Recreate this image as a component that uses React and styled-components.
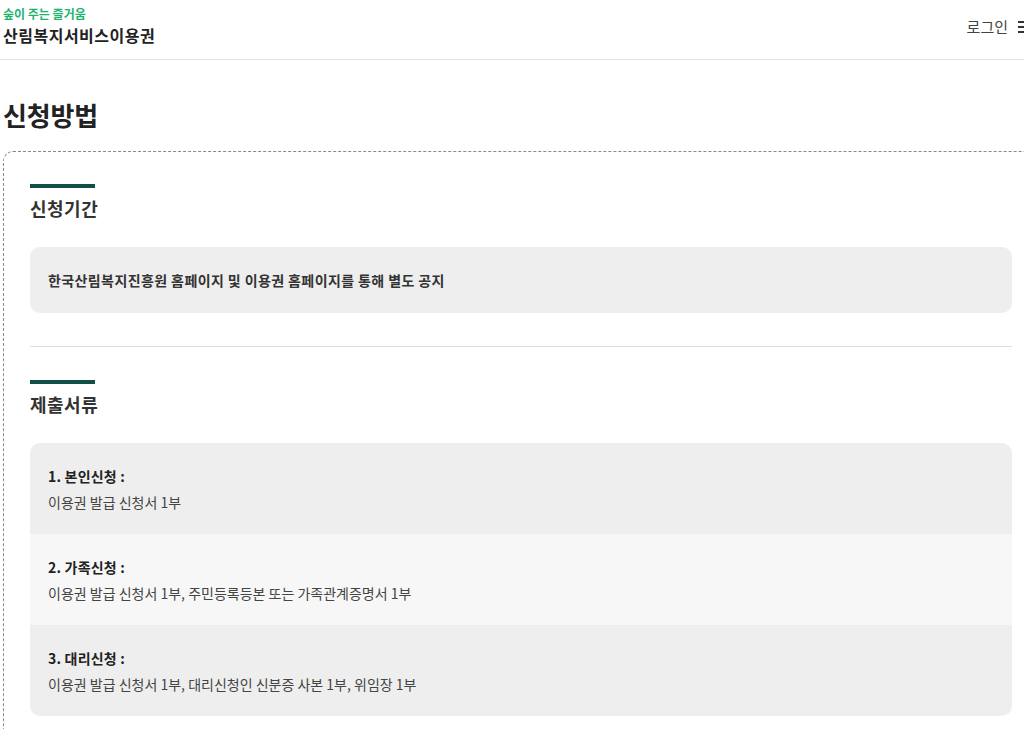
import React from "react";
import styled, { createGlobalStyle } from "styled-components";

const Global = createGlobalStyle`
  html, body { margin: 0; padding: 0; background: #fff; overflow: hidden; }
  body { font-family: "Noto Sans CJK KR", "Noto Sans", sans-serif; color: #333; }
  * { box-sizing: border-box; }
`;

const Page = styled.div`
  width: 1039px;
`;

const Header = styled.header`
  height: 60px;
  border-bottom: 1px solid #e2e2e2;
  display: flex;
  justify-content: space-between;
  align-items: flex-start;
  padding: 5px 7px 0 3px;
`;

const Brand = styled.div`
  display: flex;
  flex-direction: column;
`;

const Tagline = styled.span`
  font-size: 12px;
  line-height: 17px;
  font-weight: 700;
  color: #1db46e;
`;

const SiteName = styled.span`
  font-size: 16px;
  line-height: 26px;
  font-weight: 700;
  color: #222;
  letter-spacing: 0.5px;
`;

const Util = styled.div`
  display: flex;
  align-items: center;
  gap: 10px;
  height: 43px;
`;

const Login = styled.a`
  font-size: 15px;
  color: #444;
  text-decoration: none;
`;

const Burger = styled.span`
  display: flex;
  flex-direction: column;
  gap: 3px;
  width: 14px;
  span {
    display: block;
    height: 2px;
    background: #333;
  }
`;

const Title = styled.h1`
  margin: 37px 0 18px 3px;
  font-size: 26px;
  line-height: 36px;
  font-weight: 700;
  color: #222;
  letter-spacing: -0.2px;
`;

const Frame = styled.div`
  margin-left: 3px;
  border: 1px dashed #8a8a8a;
  border-right: none;
  border-bottom: none;
  border-top-left-radius: 10px;
  padding: 32px 27px 40px 26px;
`;

const Section = styled.section`
  display: flex;
  flex-direction: column;
`;

const Bar = styled.div`
  width: 65px;
  height: 4px;
  background: #0f4f46;
`;

const Heading = styled.h2`
  margin: 7px 0 0;
  font-size: 18px;
  line-height: 26px;
  font-weight: 700;
  color: #333;
  letter-spacing: 0.5px;
`;

const InfoBox = styled.div`
  margin-top: 26px;
  background: #eeeeee;
  border-radius: 10px;
  padding: 23px 18px;
  font-size: 14px;
  line-height: 20px;
  font-weight: 700;
  color: #333;
  letter-spacing: 0.4px;
`;

const Divider = styled.hr`
  margin: 33px 0;
  border: none;
  border-top: 1px solid #dedede;
`;

const List = styled.ul`
  margin: 26px 0 0;
  padding: 0;
  list-style: none;
  border-radius: 10px;
  overflow: hidden;
`;

const Item = styled.li`
  background: ${(p) => (p.$alt ? "#f7f7f7" : "#eeeeee")};
  padding: 23px 18px 22px;
  display: flex;
  flex-direction: column;
  gap: 6px;
`;

const ItemTitle = styled.strong`
  font-size: 14px;
  line-height: 20px;
  font-weight: 700;
  color: #222;
  letter-spacing: 0.2px;
`;

const ItemText = styled.span`
  font-size: 14px;
  line-height: 20px;
  color: #444;
`;

const items = [
  { t: "1. 본인신청 :", d: "이용권 발급 신청서 1부" },
  { t: "2. 가족신청 :", d: "이용권 발급 신청서 1부, 주민등록등본 또는 가족관계증명서 1부" },
  { t: "3. 대리신청 :", d: "이용권 발급 신청서 1부, 대리신청인 신분증 사본 1부, 위임장 1부" },
];

export default function App() {
  return (
    <Page>
      <Global />
      <Header>
        <Brand>
          <Tagline>숲이 주는 즐거움</Tagline>
          <SiteName>산림복지서비스이용권</SiteName>
        </Brand>
        <Util>
          <Login href="#">로그인</Login>
          <Burger>
            <span />
            <span />
            <span />
          </Burger>
        </Util>
      </Header>
      <Title>신청방법</Title>
      <Frame>
        <Section>
          <Bar />
          <Heading>신청기간</Heading>
          <InfoBox>한국산림복지진흥원 홈페이지 및 이용권 홈페이지를 통해 별도 공지</InfoBox>
        </Section>
        <Divider />
        <Section>
          <Bar />
          <Heading>제출서류</Heading>
          <List>
            {items.map((it, i) => (
              <Item key={i} $alt={i === 1}>
                <ItemTitle>{it.t}</ItemTitle>
                <ItemText>{it.d}</ItemText>
              </Item>
            ))}
          </List>
        </Section>
      </Frame>
    </Page>
  );
}
